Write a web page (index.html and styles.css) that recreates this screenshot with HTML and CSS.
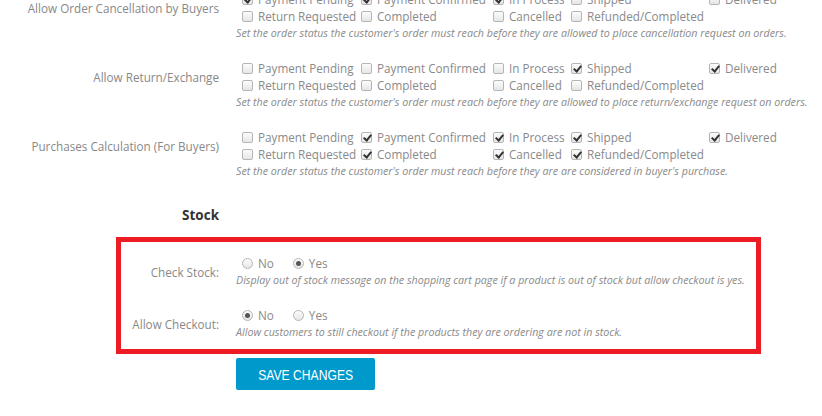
FILE: index.html
```html
<!DOCTYPE html>
<html lang="en">

<head>
  <meta charset="UTF-8">
  <meta name="viewport" content="width=device-width, initial-scale=1">
  <title>Order Settings</title>
  <link rel="stylesheet" href="styles.css">
</head>

<body>
  <div class="settings">
    <!-- Order status options -->
    <div class="field">
      <div class="field-label">Allow Order Cancellation by Buyers</div>
      <div class="options">
        <label class="opt"><span class="cb on"></span>Payment Pending</label>
        <label class="opt"><span class="cb on"></span>Payment Confirmed</label>
        <label class="opt"><span class="cb on"></span>In Process</label>
        <label class="opt"><span class="cb"></span>Shipped</label>
        <label class="opt"><span class="cb"></span>Delivered</label>
        <label class="opt"><span class="cb"></span>Return Requested</label>
        <label class="opt"><span class="cb"></span>Completed</label>
        <label class="opt"><span class="cb"></span>Cancelled</label>
        <label class="opt"><span class="cb"></span>Refunded/Completed</label>
      </div>
      <p class="hint">Set the order status the customer's order must reach before they are allowed to place cancellation request on orders.</p>
    </div>

    <div class="field">
      <div class="field-label">Allow Return/Exchange</div>
      <div class="options">
        <label class="opt"><span class="cb"></span>Payment Pending</label>
        <label class="opt"><span class="cb"></span>Payment Confirmed</label>
        <label class="opt"><span class="cb"></span>In Process</label>
        <label class="opt"><span class="cb on"></span>Shipped</label>
        <label class="opt"><span class="cb on"></span>Delivered</label>
        <label class="opt"><span class="cb"></span>Return Requested</label>
        <label class="opt"><span class="cb"></span>Completed</label>
        <label class="opt"><span class="cb"></span>Cancelled</label>
        <label class="opt"><span class="cb"></span>Refunded/Completed</label>
      </div>
      <p class="hint">Set the order status the customer's order must reach before they are allowed to place return/exchange request on orders.</p>
    </div>

    <div class="field">
      <div class="field-label">Purchases Calculation (For Buyers)</div>
      <div class="options">
        <label class="opt"><span class="cb"></span>Payment Pending</label>
        <label class="opt"><span class="cb on"></span>Payment Confirmed</label>
        <label class="opt"><span class="cb on"></span>In Process</label>
        <label class="opt"><span class="cb on"></span>Shipped</label>
        <label class="opt"><span class="cb on"></span>Delivered</label>
        <label class="opt"><span class="cb"></span>Return Requested</label>
        <label class="opt"><span class="cb on"></span>Completed</label>
        <label class="opt"><span class="cb on"></span>Cancelled</label>
        <label class="opt"><span class="cb on"></span>Refunded/Completed</label>
      </div>
      <p class="hint">Set the order status the customer's order must reach before they are are considered in buyer's purchase.</p>
    </div>

    <!-- Stock -->
    <div class="section-title">
      <h3>Stock</h3>
    </div>

    <div class="highlight">
      <div class="field stock">
        <div class="field-label">Check Stock:</div>
        <div class="radios">
          <label class="opt"><span class="rd"></span>No</label>
          <label class="opt"><span class="rd on"></span>Yes</label>
        </div>
        <p class="hint">Display out of stock message on the shopping cart page if a product is out of stock but allow checkout is yes.</p>
      </div>

      <div class="field stock">
        <div class="field-label">Allow Checkout:</div>
        <div class="radios">
          <label class="opt"><span class="rd on"></span>No</label>
          <label class="opt"><span class="rd"></span>Yes</label>
        </div>
        <p class="hint">Allow customers to still checkout if the products they are ordering are not in stock.</p>
      </div>
    </div>

    <div class="actions">
      <button class="save-btn"><span>SAVE CHANGES</span></button>
    </div>
  </div>
</body>

</html>
```

FILE: styles.css
```css
* {
  margin: 0;
  padding: 0;
  box-sizing: border-box;
}

body {
  font-family: 'Open Sans', 'DejaVu Sans', sans-serif;
  font-size: 11.7px;
  color: #8a8a8a;
  background: #fff;
}

/* page is scrolled a little, first row is cut at the top */
.settings {
  margin-top: -9px;
}

.field {
  display: grid;
  grid-template-columns: 219px 1fr;
  column-gap: 17px;
  margin-bottom: 18px;
}

.field-label {
  grid-column: 1;
  grid-row: 1;
  align-self: center;
  text-align: right;
  color: #888;
  line-height: 17px;
}

.options {
  grid-column: 2;
  grid-row: 1;
  display: grid;
  grid-template-columns: 119px 132px 78px 138px auto;
  padding-left: 6px;
}

.opt {
  display: flex;
  align-items: center;
  height: 17px;
  line-height: 17px;
  white-space: nowrap;
}

.hint {
  grid-column: 2;
  grid-row: 2;
  font-style: italic;
  font-size: 10.7px;
  line-height: 17px;
  color: #8a8a8a;
}

/* checkboxes */
.cb {
  width: 11px;
  height: 11px;
  margin-right: 5px;
  border: 1px solid #b5b5b5;
  border-radius: 2px;
  background: linear-gradient(#fcfcfc, #e6e6e6);
  position: relative;
  flex-shrink: 0;
}

.cb.on::after {
  content: '';
  position: absolute;
  left: 3px;
  top: 0px;
  width: 3px;
  height: 6px;
  border-right: 2px solid #333;
  border-bottom: 2px solid #333;
  transform: rotate(40deg);
}

/* radios */
.rd {
  width: 11px;
  height: 11px;
  margin-right: 5px;
  border: 1px solid #b5b5b5;
  border-radius: 50%;
  background: linear-gradient(#fcfcfc, #e6e6e6);
  position: relative;
  flex-shrink: 0;
}

.rd.on::after {
  content: '';
  position: absolute;
  left: 2px;
  top: 2px;
  width: 5px;
  height: 5px;
  border-radius: 50%;
  background: #555;
}

.radios {
  grid-column: 2;
  grid-row: 1;
  display: flex;
  gap: 19px;
  padding-left: 6px;
}

.section-title {
  width: 219px;
  text-align: right;
  padding-top: 8px;
  margin-bottom: 13px;
}

.section-title h3 {
  font-size: 13.5px;
  font-weight: 700;
  color: #333;
  line-height: 18px;
}

.highlight {
  margin-left: 116px;
  width: 645px;
  border: 5px solid #ed1c24;
  padding: 13px 0 8px 0;
}

.highlight .field {
  grid-template-columns: 98px 1fr;
}

.highlight .field:last-child {
  margin-bottom: 0;
}

.field.stock .field-label {
  grid-row: 1 / 3;
}

.actions {
  padding: 4px 0 0 236px;
}

.save-btn {
  display: block;
  width: 139px;
  height: 32px;
  background: #0099cc;
  color: #fff;
  border: none;
  border-radius: 2px;
  font-family: 'Liberation Sans', Arial, sans-serif;
  font-size: 15px;
  cursor: pointer;
}

/* the original uses a narrow face, squeeze the regular one */
.save-btn span {
  display: inline-block;
  transform: scaleX(0.81);
}
```
